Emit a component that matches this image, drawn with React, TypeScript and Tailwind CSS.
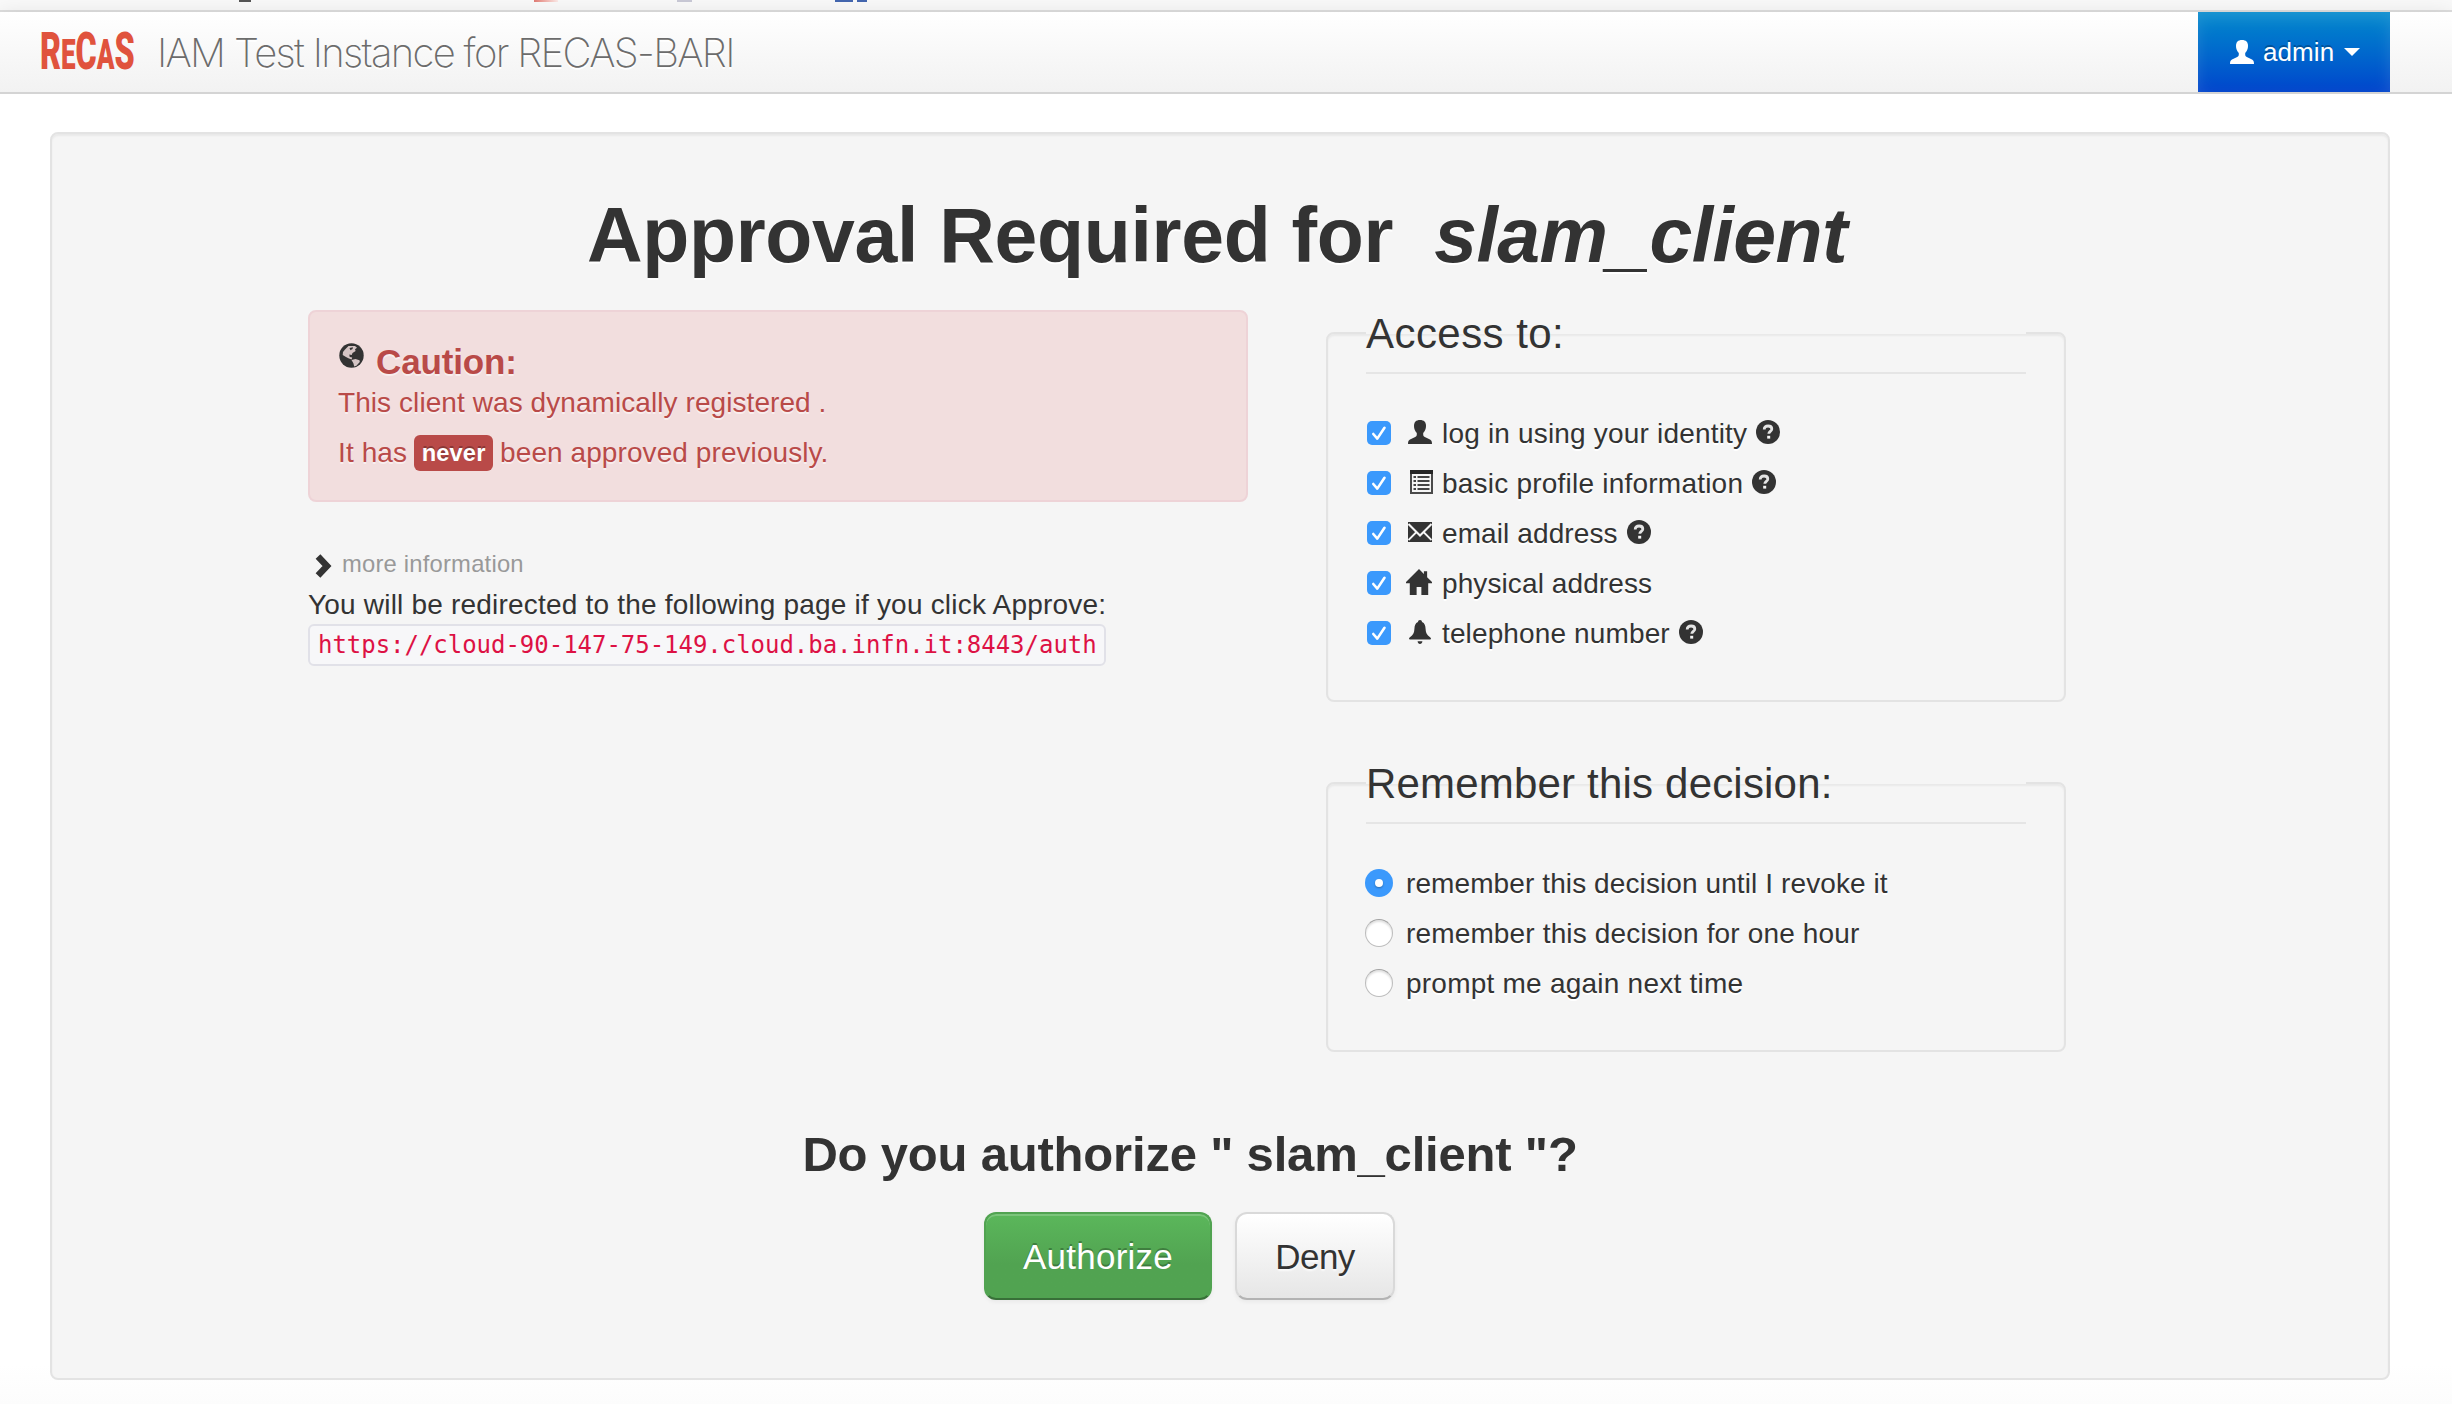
import type { ReactNode } from 'react';

const UserIcon = () => (
  <svg viewBox="0 0 24 24" className="block h-6 w-6" fill="currentColor">
    <path d="M12 0C8 0 6 2 6 6c0 2.800 1 5 2.800 7v1.600c0 1.200-.4 1.800-1.600 2.400L2 19.600C.6 20.400 0 21.600 0 24h24c0-2.400-.6-3.600-2-4.400L16.800 17c-1.200-.6-1.600-1.200-1.600-2.400V13C17 11 18 8.800 18 6c0-4-2-6-6-6z" />
  </svg>
);

const ListIcon = () => (
  <svg viewBox="0 0 24 24" className="ml-px block h-6 w-6">
    <rect x="2" y="1" width="21" height="22" fill="#f5f5f5" stroke="#4a4a4a" strokeWidth="2" />
    <rect x="1" y="0" width="23" height="4" fill="#252525" />
    <g fill="#444">
      <rect x="4.500" y="6" width="2.500" height="2" />
      <rect x="4.500" y="10" width="2.500" height="2" />
      <rect x="4.500" y="14" width="2.500" height="2" />
      <rect x="4.500" y="18" width="2.500" height="2" />
      <rect x="8.500" y="6" width="12" height="2" />
      <rect x="8.500" y="10" width="12" height="2" />
      <rect x="8.500" y="14" width="12" height="2" />
      <rect x="8.500" y="18" width="12" height="2" />
    </g>
  </svg>
);

const MailIcon = () => (
  <svg viewBox="0 0 24 24" className="block h-6 w-6" fill="#333">
    <rect x="0" y="2" width="24" height="20" />
    <path d="M.5 4 12 15.500 23.500 4" fill="none" stroke="#f5f5f5" strokeWidth="2" />
    <path d="M.5 20 8.500 12M23.500 20 15.500 12" fill="none" stroke="#f5f5f5" strokeWidth="1.800" />
  </svg>
);

const HomeIcon = () => (
  <svg viewBox="0 0 24 24" className="-mt-px -ml-0.5 block h-[26px] w-[26px]" fill="currentColor">
    <path d="M12 0 0 12v1.200h3.500V24h6.300v-7.500h4.400V24h6.300V13.200H24V12l-4.500-4.500V2H16.500v2.500z" />
  </svg>
);

const BellIcon = () => (
  <svg viewBox="0 0 24 24" className="block h-6 w-6" fill="currentColor">
    <path d="M12 0c-1.200 0-2 .8-2 2C7.200 3.200 6.600 5.500 6.400 9c-.2 3.500-1 5-2.400 6.400C2.400 16.800 1 17.400 1 18.800c0 .5.4.8 1 .8h20c.6 0 1-.3 1-.8 0-1.400-1.400-2-3-3.400-1.400-1.400-2.200-2.900-2.400-6.400C17.400 5.500 16.800 3.200 14 2c0-1.200-.8-2-2-2zM9.600 21.200c.2 1.700 1.100 2.800 2.400 2.800s2.200-1.100 2.400-2.800z" />
  </svg>
);

const HelpIcon = () => (
  <svg viewBox="0 0 24 24" className="block h-6 w-6">
    <circle cx="12" cy="12" r="12" fill="#333" />
    <path d="M8.200 9.600c0-2.400 1.500-3.600 3.900-3.600s3.700 1.200 3.700 3c0 2.500-3 2.400-3 4.800" fill="none" stroke="#e4e4e4" strokeWidth="2.800" />
    <rect x="11.200" y="15.800" width="3" height="2.800" fill="#f5f5f5" />
  </svg>
);

const GlobeIcon = () => (
  <svg viewBox="0 0 25 25" className="block h-[25px] w-[25px]">
    <circle cx="12.500" cy="12.500" r="12.200" fill="#333" />
    <path d="M6 6.500 9.500 3h6.500l2 1.800-2 1.400.6 1.800-3.100 1.900-.8 2-2.400-.3.400 2.400 2.500.6-.6 1.800-2.600-.8-3-1.600-3.300-2 .3-3z" fill="#f2dede" opacity=".85" />
    <path d="m12.500 17 4-1 4 1.200.3 1.800-3.400 3.800-2.200.8-.8-3.400z" fill="#f2dede" opacity=".85" />
    <path d="m10.500 5 3.500-.8-.5 1.800-2 1.200z" fill="#333" />
  </svg>
);

const CheckBox = () => (
  <span className="mt-[7px] ml-px flex h-6 w-6 shrink-0 items-center justify-center rounded-[5px] bg-[#3b99fc]">
    <svg viewBox="0 0 24 24" className="h-6 w-6" fill="none" stroke="#fff" strokeWidth="2.600" strokeLinecap="round" strokeLinejoin="round">
      <path d="m6.300 13 4 4.600L17.500 6.800" />
    </svg>
  </span>
);

const Radio = ({ on }: { on?: boolean }) =>
  on ? (
    <span className="mt-[5px] -ml-px flex h-7 w-7 shrink-0 items-center justify-center rounded-full bg-[#3b99fc]">
      <span className="h-2 w-2 rounded-full bg-white shadow-[0_1px_2px_rgba(0,0,0,0.3)]" />
    </span>
  ) : (
    <span className="mt-[5px] -ml-px h-7 w-7 shrink-0 rounded-full border border-[#bdbdbd] border-t-[#a3a3a3] bg-white shadow-[inset_0_2px_2px_rgba(0,0,0,0.12)]" />
  );

type Scope = { icon: ReactNode; label: ReactNode; help: boolean };

const scopes: Scope[] = [
  { icon: <UserIcon />, label: <span className="tracking-[0.184px]">log in using your identity</span>, help: true },
  { icon: <ListIcon />, label: <span className="tracking-[0.22px]">basic profile information</span>, help: true },
  { icon: <MailIcon />, label: <span className="tracking-[0.1px]">email address</span>, help: true },
  { icon: <HomeIcon />, label: <span className="tracking-[0.1px]">physical address</span>, help: false },
  { icon: <BellIcon />, label: <span className="tracking-[0.13px]">telephone number</span>, help: true },
];

const Box = ({ title, className, children }: { title: ReactNode; className: string; children: ReactNode }) => (
  <fieldset className={`w-[740px] rounded-lg border-2 border-[#e3e3e3] px-[38px] shadow-[inset_0_2px_2px_rgba(0,0,0,0.05)] ${className}`}>
    <legend className="mb-10 block h-[82px] w-full border-b-2 border-[#e5e5e5] pt-0.5 text-[42px] leading-[80px] text-[#333]">{title}</legend>
    <div className="flex flex-col gap-2.5">{children}</div>
  </fieldset>
);

export default function App() {
  return (
    <div className="flex h-[1404px] w-[2452px] flex-col overflow-hidden bg-white font-['Liberation_Sans',Arial,sans-serif] text-[28px] leading-10 text-[#333]">
      <div className="flex h-3 shrink-0 items-start border-b-2 border-[#dedede] bg-[#f9f9f9]">
        <span className="ml-[239px] h-0.5 w-3 bg-[#555]" />
        <span className="ml-[283px] h-0.5 w-6 bg-linear-to-r from-[#e07b74] to-[#fbeae8]" />
        <span className="ml-[119px] h-0.5 w-[15px] bg-[#c9c9d6]" />
        <span className="ml-[143px] h-0.5 w-[18px] bg-[#4467b0]" />
        <span className="ml-1 h-0.5 w-2.5 bg-[#4467b0]" />
      </div>

      <header className="flex h-[82px] shrink-0 items-center border-b-2 border-[#d4d4d4] bg-linear-to-b from-white to-[#f2f2f2] pr-[62px] pl-10 shadow-[0_2px_20px_rgba(0,0,0,0.1)]">
        <div className="h-20 w-[117px]">
          <span className="inline-block origin-left scale-x-[0.62] pt-px font-[Roboto] text-[52px] leading-[78px] font-black whitespace-nowrap text-[#e0533d]">
            R<span className="text-[42px]">E</span>C<span className="text-[42px]">A</span>S
          </span>
        </div>
        <span className="pt-0.5 font-[Inter] text-[40px] leading-[78px] font-extralight tracking-[-1.68px] whitespace-nowrap text-[#6c6c6c] [text-shadow:0_2px_0_#fff]">
          IAM Test Instance for RECAS-BARI
        </span>
        <div className="ml-auto flex h-20 w-48 bg-linear-to-b from-[#0088cc] to-[#0044cc] pl-8 text-white shadow-[inset_0_6px_16px_rgba(255,255,255,0.125)]">
          <div className="mt-7">
            <UserIcon />
          </div>
          <span className="ml-[9px] pt-[20px] text-[26px] tracking-[0.086px] [text-shadow:0_-2px_0_rgba(0,0,0,0.25)]">admin</span>
          <svg viewBox="0 0 16 8" className="mt-9 ml-[10px] h-2 w-4" fill="#fff">
            <path d="M0 0h16L8 8z" />
          </svg>
        </div>
      </header>

      <div className="flex grow flex-col bg-linear-to-b from-white from-97% to-[#fcfcfc]">
        <main className="mt-[38px] ml-[50px] flex h-[1248px] w-[2340px] flex-col rounded-lg border-2 border-[#e3e3e3] bg-[#f5f5f5] shadow-[inset_0_2px_2px_rgba(0,0,0,0.05)]">
          <h1 className="mt-[61px] flex h-20 justify-center gap-[41px] pr-1.5 text-[77px] leading-20 font-bold whitespace-nowrap [text-shadow:0_2px_0_#fff]">
            <span className="tracking-[-0.32px]">Approval Required for</span>
            <em className="tracking-[-0.6px]">slam_client</em>
          </h1>

          <div className="ml-[256px] flex w-[1764px] flex-col">
            <div className="flex justify-between pr-[6px]">
              <section className="mt-[35px] w-[940px]">
                <div className="flex h-48 flex-col rounded-lg border-2 border-[#eed3d7] bg-[#f2dede] pt-[31px] pl-7 text-[#b94a48] [text-shadow:0_2px_0_rgba(255,255,255,0.5)]">
                  <div className="-mt-px mb-px flex h-10 text-[35px] leading-10 font-bold">
                    <span className="mt-px ml-px"><GlobeIcon /></span>
                    <span className="ml-3 tracking-[-0.13px]">Caution:</span>
                  </div>
                  <p className="h-[50px] tracking-[0.073px]">This client was dynamically registered .</p>
                  <p className="flex h-10">
                    <span className="tracking-[0.1px]">It has</span>
                    <span className="mt-0.5 ml-[7px] h-9 w-[79px] rounded-md bg-[#b94a48] text-center text-[23.700px] leading-[37px] font-bold tracking-[0.1px] text-white [text-shadow:0_-2px_0_rgba(0,0,0,0.25)]">never</span>
                    <span className="ml-[7px] tracking-[0.08px]">been approved previously.</span>
                  </p>
                </div>

                <div className="mt-[42px] flex h-10 text-[23.800px] text-[#999]">
                  <svg viewBox="0 0 18 24" className="mt-[10px] ml-[7px] h-6 w-[18px]" fill="none" stroke="#333" strokeWidth="6.500">
                    <path d="M3 2.500 12 12 3 21.500" />
                  </svg>
                  <span className="ml-[9px] tracking-[0.2px]">more information</span>
                </div>
                <p className="pt-px leading-[39px] tracking-[0.2px]">You will be redirected to the following page if you click Approve:</p>
                <code className="block h-[42px] w-[798px] rounded-md border-2 border-[#e1e1e8] bg-[#f7f7f9] pl-2 font-['DejaVu_Sans_Mono',monospace] text-[24px] leading-[39px] tracking-[-0.03px] whitespace-nowrap text-[#dd1144]">
                  https://cloud-90-147-75-149.cloud.ba.infn.it:8443/auth
                </code>
              </section>

              <section className="mt-[17px] flex flex-col gap-10">
                <Box title={<span className="tracking-[0.45px]">Access to:</span>} className="h-[410px]">
                  {scopes.map((s, i) => (
                    <label key={i} className="flex h-10 [text-shadow:0_2px_0_#fff]">
                      <CheckBox />
                      <span className="mt-[6px] ml-[17px] w-6">{s.icon}</span>
                      <span className="ml-[10px]">{s.label}</span>
                      {s.help && <span className="mt-[6px] ml-[9px]"><HelpIcon /></span>}
                    </label>
                  ))}
                </Box>
                <Box title={<span className="tracking-[0.19px]">Remember this decision:</span>} className="h-[310px]">
                  <label className="flex h-10 gap-[13px] [text-shadow:0_2px_0_#fff]">
                    <Radio on />
                    <span className="tracking-[0.1px]">remember this decision until I revoke it</span>
                  </label>
                  <label className="flex h-10 gap-[13px] [text-shadow:0_2px_0_#fff]">
                    <Radio />
                    <span className="tracking-[0.15px]">remember this decision for one hour</span>
                  </label>
                  <label className="flex h-10 gap-[13px] [text-shadow:0_2px_0_#fff]">
                    <Radio />
                    <span className="tracking-[0.233px]">prompt me again next time</span>
                  </label>
                </Box>
              </section>
            </div>

            <h3 className="mt-[62px] h-20 text-center text-[49px] leading-20 font-bold tracking-[-0.193px]">Do you authorize " slam_client "?</h3>
            <div className="mt-[18px] flex justify-center gap-[23px] pr-px text-[35px] leading-[42px]">
              <button className="h-[88px] w-[228px] rounded-xl border-2 border-[#51a351] border-b-[#387038] bg-linear-to-b from-[#5bb75b] to-[#51a351] to-60% pt-px tracking-[0.263px] text-white shadow-[inset_0_2px_0_rgba(255,255,255,0.2),0_2px_4px_rgba(0,0,0,0.05)] [text-shadow:0_-2px_0_rgba(0,0,0,0.25)]">
                Authorize
              </button>
              <button className="h-[88px] w-40 rounded-xl border-2 border-[#d9d9d9] border-b-[#b3b3b3] bg-linear-to-b from-white to-[#e6e6e6] pt-px tracking-[-0.569px] shadow-[inset_0_2px_0_rgba(255,255,255,0.2),0_2px_4px_rgba(0,0,0,0.05)] [text-shadow:0_2px_2px_rgba(255,255,255,0.75)]">
                Deny
              </button>
            </div>
          </div>
        </main>
      </div>
    </div>
  );
}
